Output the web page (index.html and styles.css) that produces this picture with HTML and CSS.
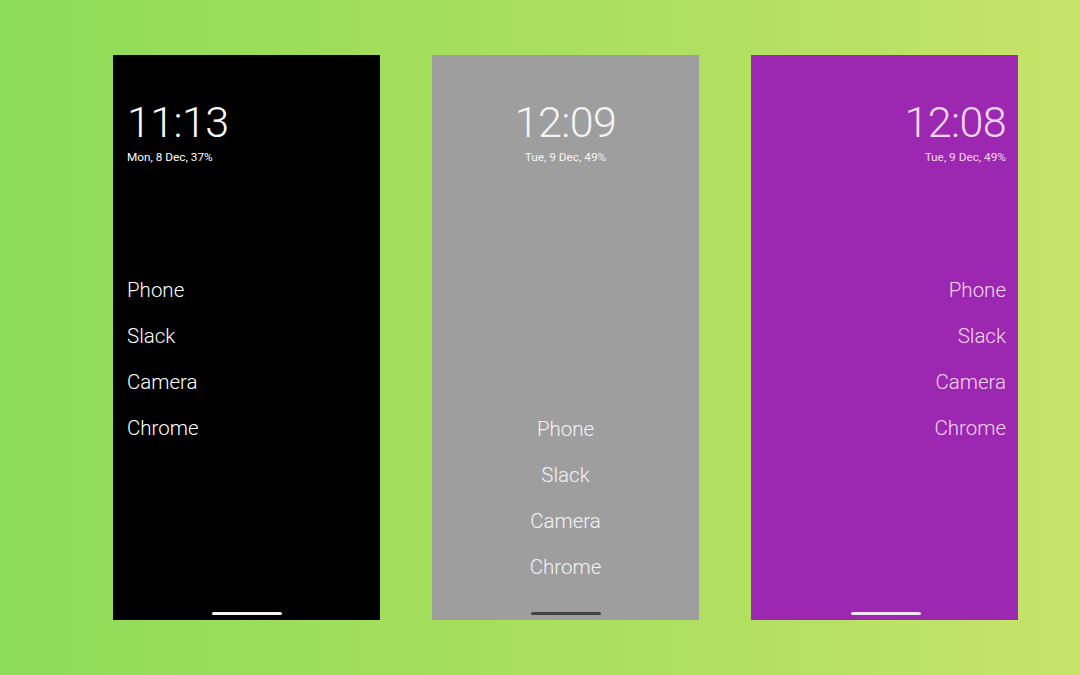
FILE: index.html
```html
<!DOCTYPE html>
<html>
<head>
<meta charset="utf-8">
<link rel="stylesheet" href="styles.css">
</head>
<body>
<div class="stage">
  <div class="phone phone-black">
    <div class="clock">11:13</div>
    <div class="date">Mon, 8 Dec, 37%</div>
    <ul class="apps">
      <li>Phone</li>
      <li>Slack</li>
      <li>Camera</li>
      <li>Chrome</li>
    </ul>
    <div class="bar"></div>
  </div>
  <div class="phone phone-gray">
    <div class="clock">12:09</div>
    <div class="date">Tue, 9 Dec, 49%</div>
    <ul class="apps">
      <li>Phone</li>
      <li>Slack</li>
      <li>Camera</li>
      <li>Chrome</li>
    </ul>
    <div class="bar"></div>
  </div>
  <div class="phone phone-purple">
    <div class="clock">12:08</div>
    <div class="date">Tue, 9 Dec, 49%</div>
    <ul class="apps">
      <li>Phone</li>
      <li>Slack</li>
      <li>Camera</li>
      <li>Chrome</li>
    </ul>
    <div class="bar"></div>
  </div>
</div>
</body>
</html>
```
FILE: styles.css
```css
html, body {
  margin: 0;
  padding: 0;
  width: 1080px;
  height: 675px;
  overflow: hidden;
}
body {
  background: linear-gradient(90deg, #8ddc5a 0%, #a3de5c 40%, #b3e062 70%, #c6e469 100%);
  font-family: Roboto, "Noto Sans", sans-serif;
}
.stage {
  display: flex;
  gap: 52px;
  padding: 55px 0 0 113px;
}
.phone {
  width: 267px;
  height: 565px;
  box-sizing: border-box;
  padding: 45px 14px 5px;
  display: flex;
  flex-direction: column;
  color: #ffffff;
}
.clock {
  font-size: 43px;
  line-height: 44px;
  font-weight: 300;
  letter-spacing: -0.6px;
}
.date {
  margin-top: 5px;
  font-size: 11.8px;
  line-height: 16px;
  font-weight: 400;
}
.apps {
  list-style: none;
  margin: 102px 0 0;
  padding: 0;
}
.apps li {
  font-size: 20.5px;
  line-height: 46px;
  height: 46px;
  font-weight: 300;
}
.bar {
  width: 70px;
  height: 3px;
  border-radius: 2px;
  align-self: center;
  margin-top: auto;
  background: #f2f2f2;
}
.phone-black {
  background: #000000;
}
.phone-gray {
  background: #9e9e9e;
  text-align: center;
  color: #f4f4f4;
}
.phone-gray .apps {
  margin-top: auto;
}
.phone-gray .bar {
  margin-top: 22px;
  background: #444444;
}
.phone-purple {
  background: #9c27b0;
  text-align: right;
  color: #f6d8f8;
  padding-right: 12px;
}
.phone-purple .bar {
  background: #f6e6f8;
}
```
